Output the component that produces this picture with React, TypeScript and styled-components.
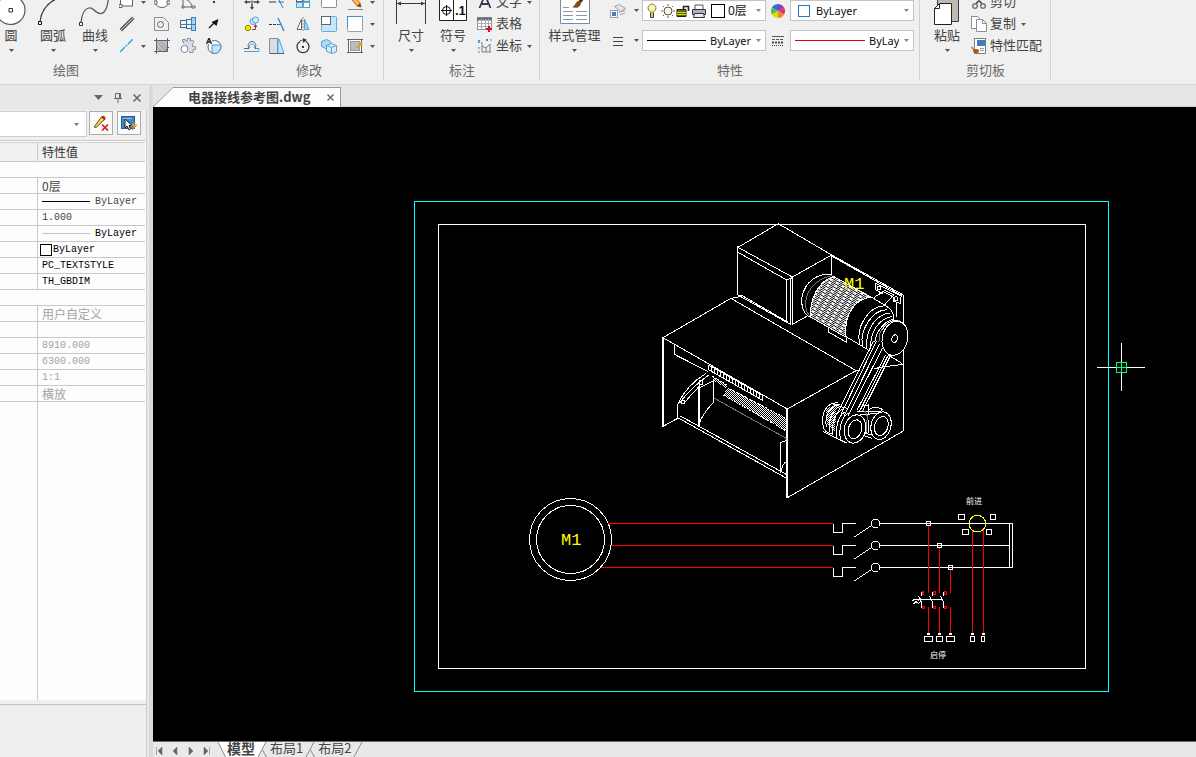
import React from "react";
import styled, { createGlobalStyle } from "styled-components";

const UI = `"Noto Sans", "Noto Sans CJK SC", sans-serif`;
const CJK = `"Noto Sans CJK SC", "Noto Sans", sans-serif`;
const MONO = `"Liberation Mono", "Noto Sans CJK SC", monospace`;

const Global = createGlobalStyle`
  * { box-sizing: border-box; }
  body { margin: 0; overflow: hidden; background: #f0f0f0; font-family: ${CJK}; font-size: 13px; color: #444; }
  button, select { font: inherit; color: inherit; margin: 0; padding: 0; border: 0; background: none; }
  svg { display: block; flex: none; }
`;

const Shell = styled.div`
  display: flex;
  flex-direction: column;
  height: 100vh;
`;

/* ---------- ribbon ---------- */

const Ribbon = styled.header`
  display: flex;
  flex: none;
  overflow: hidden;
  background: #f0f0f0;
  border-bottom: 1px solid #d4d4d4;
`;

const Panel = styled.section<{ $w: number; $scrolled?: number }>`
  display: flex;
  flex-direction: column;
  flex: none;
  width: ${(p) => p.$w}px;
  margin-left: ${(p) => -(p.$scrolled || 0)}px;
  position: relative;
  &::after {
    content: "";
    position: absolute;
    right: 0;
    top: 0;
    bottom: 4px;
    width: 1px;
    background: #d2d2d2;
  }
`;

const PanelBody = styled.div<{ $end?: boolean }>`
  display: flex;
  align-items: flex-end;
  justify-content: ${(p) => (p.$end ? "flex-end" : "flex-start")};
  height: 57px;
  padding: 0 7px 0 6px;
  overflow: hidden;
`;

const PanelTitle = styled.h2`
  margin: 0;
  padding-bottom: 2px;
  font-size: 13px;
  font-weight: 400;
  line-height: 25px;
  text-align: center;
  color: #6a6a6a;
`;

const BigButton = styled.button<{ $w?: number }>`
  display: flex;
  flex-direction: column;
  align-items: center;
  flex: none;
  width: ${(p) => p.$w || 42}px;
  height: 66px;
  line-height: 18px;
  white-space: nowrap;
`;

const ArrowBox = styled.span`
  display: flex;
  align-items: center;
  justify-content: center;
  height: 13px;
`;

const IconGrid = styled.div<{ $cols: string }>`
  display: grid;
  flex: none;
  grid-template-columns: ${(p) => p.$cols};
  grid-template-rows: repeat(3, 22px);
`;

const IconButton = styled.button`
  display: flex;
  align-items: center;
  justify-content: center;
`;

const ToolColumn = styled.div`
  display: grid;
  grid-template-rows: repeat(3, 22px);
  justify-items: start;
  margin-left: 3px;
`;

const ToolButton = styled.button`
  display: flex;
  align-items: center;
  gap: 3px;
  line-height: 18px;
  white-space: nowrap;
  & > svg:last-child { margin-left: 2px; }
  & > span { padding-bottom: 2px; }
`;

const PropGrid = styled.div`
  display: grid;
  grid-template-columns: 24px 12px 124px 24px 124px;
  grid-template-rows: 21px 21px;
  row-gap: 9px;
  padding: 0 0 6px 3px;
  align-items: center;
`;

const Combo = styled.label`
  display: flex;
  align-items: center;
  height: 21px;
  padding: 0 4px;
  background: #fff;
  border: 1px solid #c3c3c3;
  overflow: hidden;
`;

const Select = styled.select<{ $size?: number; $indent?: number }>`
  appearance: none;
  flex: 1;
  min-width: 0;
  outline: 0;
  font-family: ${UI};
  font-size: ${(p) => p.$size || 11}px;
  line-height: 18px;
  color: #111;
  margin: 0 5px 0 ${(p) => p.$indent || 4}px;
`;

const Swatch = styled.span<{ $size: number; $color: string; $gap?: number }>`
  flex: none;
  width: ${(p) => p.$size}px;
  height: ${(p) => p.$size}px;
  margin-left: ${(p) => p.$gap || 0}px;
  border: 1px solid ${(p) => p.$color};
  background: #fff;
`;

const LineSample = styled.span<{ $w: number; $color: string }>`
  flex: none;
  width: ${(p) => p.$w}px;
  height: 1px;
  background: ${(p) => p.$color};
`;

/* ---------- workspace ---------- */

const Workspace = styled.div`
  display: flex;
  flex: 1;
  min-height: 0;
`;

const SidePanel = styled.aside`
  display: flex;
  flex-direction: column;
  flex: none;
  width: 149px;
  background: #e8e8e8;
`;

const SideHead = styled.div`
  display: flex;
  align-items: center;
  justify-content: flex-end;
  height: 25px;
  padding-right: 3px;
`;

const HeadButton = styled.button<{ $gap?: number }>`
  display: flex;
  align-items: center;
  justify-content: center;
  width: 19px;
  height: 20px;
  margin-left: ${(p) => p.$gap || 0}px;
`;

const SideBody = styled.div`
  display: flex;
  flex-direction: column;
  flex: 1;
  min-height: 0;
  width: 147px;
  background: #f0f0f0;
  border-right: 1px solid #cfcfcf;
`;

const SideTools = styled.div`
  display: flex;
  gap: 4px;
  height: 30px;
  padding: 1px 5px 0 0;
`;

const Picker = styled.label`
  display: flex;
  align-items: center;
  flex: 1;
  height: 26px;
  margin-right: -2px;
  padding-right: 7px;
  background: #fff;
  border: 1px solid #ccc;
  border-left: 0;
`;

const FrameButton = styled.button`
  display: flex;
  align-items: center;
  justify-content: center;
  width: 24px;
  height: 24px;
  background: #fbfbfb;
  border: 1px solid #ababab;
`;

const GridArea = styled.div`
  display: flex;
  flex-direction: column;
  flex: 1;
  min-height: 0;
  padding: 1px 1px 0 0;
  background: #fdfdfd;
  border-top: 1px solid #c9c9c9;
`;

const PropTable = styled.table`
  width: 100%;
  table-layout: fixed;
  border-collapse: separate;
  border-spacing: 0;
`;

const NameCol = styled.col`
  width: 38px;
`;

const HeadCell = styled.th`
  height: 20px;
  padding: 0 0 0 4px;
  font-size: 12px;
  font-weight: 400;
  line-height: 18px;
  text-align: left;
  color: #333;
  background: #f1f1f1;
  border-top: 1px solid #d0d0d0;
  border-bottom: 1px solid #c8c8c8;
  &:first-child { border-right: 1px solid #c8c8c8; }
`;

const NameCell = styled.th`
  height: 16px;
  padding: 0;
  border-right: 1px solid #c8c8c8;
  border-bottom: 1px solid #c8c8c8;
`;

const ValueCell = styled.td<{ $tone?: string; $wide?: boolean }>`
  height: 16px;
  padding: 0 0 0 4px;
  font-family: ${(p) => (p.$wide ? CJK : MONO)};
  font-size: ${(p) => (p.$wide ? 12 : 10)}px;
  line-height: 15px;
  white-space: nowrap;
  color: ${(p) => p.$tone || "#444"};
  border-bottom: 1px solid #c8c8c8;
`;

const ValueRow = styled.span<{ $gap: number }>`
  display: flex;
  align-items: center;
  gap: ${(p) => p.$gap}px;
  height: 15px;
`;

const GridRest = styled.div`
  flex: 1;
  width: 38px;
  border-right: 1px solid #c8c8c8;
`;

const Hint = styled.div`
  height: 53px;
  margin-top: 4px;
  background: #eee;
  border-top: 1px solid #c3c3c3;
`;

const Splitter = styled.div`
  flex: none;
  width: 4px;
  background: #dadada;
`;

const DocArea = styled.main`
  display: flex;
  flex-direction: column;
  flex: 1;
  min-width: 0;
`;

const DocTabs = styled.div`
  display: flex;
  align-items: flex-end;
  height: 22px;
  background: #e5e5e5;
  border-bottom: 1px solid #d0d0d0;
`;

const DocTab = styled.div`
  display: flex;
  align-items: center;
  height: 20px;
  margin-bottom: -1px;
  padding: 0 0 0 15px;
  background: #fdfdfd;
  border: 1px solid #9a9a9a;
  border-width: 1px 1px 0 0;
`;

const DocName = styled.button`
  padding-bottom: 2px;
  font-weight: 700;
  line-height: 17px;
  white-space: nowrap;
`;

const Slant = styled.svg`
  margin-bottom: -1px;
`;

const Viewport = styled.div`
  flex: 1;
  min-height: 0;
  background: #000;
  & > svg { width: 100%; height: 100%; }
`;

const LayoutBar = styled.nav`
  display: flex;
  flex: none;
  height: 16px;
  background: #e9e9e9;
  border-top: 1px solid #6a6a6a;
`;

const NavButton = styled.button`
  display: flex;
  align-items: center;
  width: 16px;
  height: 17px;
  padding-left: 2px;
`;

const LayoutTab = styled.button<{ $active?: boolean }>`
  height: 15px;
  font-size: ${(p) => (p.$active ? 14 : 13)}px;
  font-weight: ${(p) => (p.$active ? 700 : 400)};
  line-height: 12px;
  padding-bottom: 3px;
  background: ${(p) => (p.$active ? "#fff" : "transparent")};
  white-space: nowrap;
`;

/* ---------- icons ---------- */

const Caret = ({ color = "#555" }: { color?: string }) => (
  <svg width="5" height="3" viewBox="0 0 5 3"><path d="M0 0h5L2.5 3z" fill={color} /></svg>
);

const Icon = ({ children, w = 16 }: { children: React.ReactNode; w?: number }) => (
  <svg width={w} height="16" viewBox={`0 0 ${w} 16`} fill="none" stroke="#5d6470" strokeWidth="1">{children}</svg>
);

const Big = ({ children }: { children: React.ReactNode }) => (
  <svg width="40" height="35" viewBox="0 0 40 35" fill="none" stroke="#555b66">{children}</svg>
);

const drawIcons: (React.ReactNode | "caret" | null)[] = [
  <Icon><rect x="1.500" y="1.500" width="12" height="10.500" fill="#fff" /><path d="M0 10.500h3v3H0z M12 0h3v3h-3z" fill="#fff" /></Icon>,
  "caret",
  <Icon><ellipse cx="8" cy="8.500" rx="6.500" ry="5" fill="#fff" /><path d="M0 7h3v3H0z M13 7h3v3h-3z" fill="#fff" /></Icon>,
  <Icon><path d="M3 13V3l5 3M3 13h11M3 5c5 0 8 3 9 8" /><path d="M2 12h2v2H2z M12 12h3v2h-3z" fill="#fff" /></Icon>,
  <Icon><path d="M7 7h2v2H7z" fill="#333" stroke="none" /></Icon>,
  <Icon><path d="M1 13.500L13.500 1M2.500 15L15 2.500" stroke="#4d5260" strokeWidth="1.300" /><path d="M1.700 14.300L14.300 1.700" stroke="#b8bcc4" strokeWidth=".8" /></Icon>,
  null,
  <Icon><path d="M.5 1.500h9l5 5v8H.5z" stroke="#8a8e96" /><circle cx="6.500" cy="8.500" r="3" /></Icon>,
  <Icon><rect x=".5" y="4.500" width="6" height="7" fill="#e9f4fc" /><rect x="6.500" y="3.500" width="5" height="9" fill="#e9f4fc" /><rect x="11.500" y="1.500" width="4" height="13" fill="#a6d2f0" stroke="#3c83bd" /><path d="M0 8.500h16" stroke="#2f7fc1" /></Icon>,
  <Icon><path d="M3 12l6-6" stroke="#111" strokeWidth="1.300" /><path d="M12.500 3l-2 7-5-4z" fill="#111" stroke="none" /></Icon>,
  <Icon><path d="M1 14L14 1" stroke="#28a4de" strokeWidth="1.400" strokeDasharray="7 1 2 1" /></Icon>,
  "caret",
  <Icon><rect x="2.500" y="2.500" width="11" height="11" fill="#b9bdc4" /><path d="M0 2.500h16M0 13.500h10M2.500 0v16M13.500 0v10M10 14l5-5" /><path d="M4 5l7 7M7 4l6 6M3 9l4 4" stroke="#999" /></Icon>,
  <Icon><path d="M3.500 5.500V3.500H2.500V1.500H5.500V3H7.500V.5H10.500V3L12.500 2L14 4L12.500 6V8.500H15.500V11.500H13V14.500H9.500V13" fill="#d8dce8" stroke="#8b93a8" /><circle cx="4.500" cy="11" r="3.500" fill="#fff" stroke="#7b8398" /></Icon>,
  <Icon><circle cx="8.500" cy="9" r="6.500" fill="#fff" /><path d="M6 7h9c0 5-3 8.500-6 8.500-2 0-3-1.500-3-2.500z" fill="#bde6fb" stroke="#4a9bcb" /><path d="M0 0h6v6H0z" fill="#f0f0f0" stroke="none" /><path d="M.5 6L3 0L5.500 6M1.500 4h3" stroke="#222" strokeWidth="1.300" /></Icon>,
];

const editIcons: (React.ReactNode | "caret" | null)[] = [
  <Icon><path d="M8 2v4M8 10v4M2 8h4M10 8h4" stroke="#444" strokeWidth="1.500" /><path d="M6 3l2-3 2 3zM6 13l2 3 2-3zM3 6L0 8l3 2zM13 6l3 2-3 2z" fill="#444" stroke="none" /><path d="M7 7h2v2H7z" fill="#fff" /></Icon>,
  <Icon><path d="M0 8h7" stroke="#333" /><path d="M9 8h6M8 2l6 12" stroke="#2687c9" /></Icon>,
  <Icon><rect x="1.500" y="1.500" width="6" height="6" fill="#fff" /><rect x="8.500" y="1.500" width="6" height="6" fill="#bfe4fa" stroke="#5e9fcb" /><rect x="1.500" y="8.500" width="6" height="5" fill="#bfe4fa" stroke="#5e9fcb" /><rect x="8.500" y="8.500" width="6" height="5" fill="#fff" stroke="#5e9fcb" /></Icon>,
  <Icon><rect x=".5" y="1.500" width="15" height="12" rx="1" fill="#fff" stroke="#8a8e96" /></Icon>,
  <Icon><path d="M1 1l9 11 4 1-1-4L6 0z" fill="#f6b25e" stroke="#c4711d" /><path d="M10 12l4 1-1-4z" fill="#8a3a10" stroke="none" /><path d="M1 15.500h15" stroke="#888" /></Icon>,
  "caret",
  <Icon><circle cx="9" cy="5.500" r="3" fill="#d5efff" stroke="#4aa3da" /><circle cx="11.500" cy="4" r="3" fill="#d5efff" stroke="#4aa3da" /><circle cx="4" cy="12" r="2.700" fill="#ffe600" stroke="#9a8a00" /><path d="M8 13.500h3.500V10" stroke="#a33" /><path d="M9.500 11h4l-2-3z" fill="#a33" stroke="none" /></Icon>,
  <Icon><path d="M0 8.500h9" stroke="#333" strokeDasharray="3 1" /><path d="M9 8.500h3" stroke="#2687c9" /><path d="M9 2l6 13" stroke="#2687c9" strokeWidth="1.300" /></Icon>,
  <Icon><path d="M6.500 3v10.500H2z" fill="#fff" /><path d="M9.500 3v10.500H14z" fill="#9fd6f5" stroke="#5e9fcb" /><path d="M8 1v15" strokeDasharray="2 1" stroke="#888" /></Icon>,
  <Icon><rect x=".5" y=".5" width="15" height="15" rx="1" fill="#c3e8fc" stroke="#6fa9cc" /><rect x=".5" y=".5" width="9" height="8" fill="#fff" /></Icon>,
  <Icon><rect x=".5" y=".5" width="15" height="15" rx="1" fill="#fff" stroke="#9a9ea6" /><path d="M0 .5h16M.5 0v11" stroke="#2687c9" strokeDasharray="2 1" /></Icon>,
  "caret",
  <Icon><path d="M0 10.500h5c-2-4 0-7 3-7s5 3 3 7h4" /><path d="M0 13.500h15c1-3-1-3-3-3" stroke="#4aa3da" /><path d="M6 10c-1-3 0-4 2-4s3 1 2 4" stroke="#4aa3da" /></Icon>,
  <Icon><path d="M.5.500h8v15h-8z" fill="#d9dce2" stroke="#8a8e96" /><path d="M9 1h1l5 14.500H9z" fill="#c3e8fc" stroke="#4aa3da" /><path d="M1 15.500h14" /></Icon>,
  <Icon><path d="M5 3.500a6 6 0 1 0 6 0" stroke="#333" strokeWidth="1.300" /><path d="M5 3c2-1 3-1 4-1" stroke="#333" /><path d="M8 0l4 2-4 3z" fill="#333" stroke="none" /><path d="M7 8h2v2H7z" fill="#333" stroke="none" /></Icon>,
  <Icon><path d="M.5 3.500l5-2 4 2v6l-5 1-4-2z" fill="#a7dbf7" stroke="#5e9fcb" /><path d="M5.500 7.500l5-2 5 2v6l-4 2-6-2z" fill="#d3effd" stroke="#5e9fcb" /><path d="M5.500 7.500l5 2 5-2M10.500 9.500v6" stroke="#5e9fcb" /></Icon>,
  <Icon><rect x="1.500" y="1.500" width="13" height="13" fill="#fff" /><rect x="3.500" y="3.500" width="9" height="9" fill="#b9bdc4" stroke="#999" /><path d="M0 1.500h16M0 14.500h16" /><path d="M10 10l5-6" stroke="#e89a3a" strokeWidth="2.500" /></Icon>,
  "caret",
];

const IconSet = ({ items, label }: { items: (React.ReactNode | "caret" | null)[]; label: string }) => (
  <>
    {items.map((it, i) =>
      it === null ? <span key={i} /> : <IconButton key={i} aria-label={`${label} ${i + 1}`}>{it === "caret" ? <Caret /> : it}</IconButton>
    )}
  </>
);

const BigTool = ({ label, w, children }: { label: string; w?: number; children: React.ReactNode }) => (
  <BigButton $w={w}>
    <Big>{children}</Big>
    {label}
    <ArrowBox><Caret /></ArrowBox>
  </BigButton>
);

const LineGlyph = () => <Icon w={12}><path d="M1 4.500h10M1 8.500h10M1 12.500h10" stroke="#444" /></Icon>;

const ColorWheel = () => {
  const cols = ["#8a3fb0", "#e0307a", "#f08a24", "#f2d21f", "#5dbb46", "#2c6fd8"];
  const pt = (a: number) => `${8 + 7 * Math.sin(a)} ${8 - 7 * Math.cos(a)}`;
  return (
    <Icon>
      {cols.map((c, i) => (
        <path key={c} stroke="none" fill={c} d={`M8 8L${pt((i * Math.PI) / 3)}A7 7 0 0 1 ${pt(((i + 1) * Math.PI) / 3)}z`} />
      ))}
    </Icon>
  );
};

/* ---------- drawing ---------- */

const Cad = styled.svg`
  shape-rendering: crispEdges;
  fill: none;
  stroke: #fff;
  & * { vector-effect: non-scaling-stroke; }
`;

const CadTag = styled.text`
  fill: #ff0;
  stroke: none;
  font-family: "Liberation Mono", monospace;
  font-size: 17px;
`;

const CadNote = styled.text`
  fill: #fff;
  stroke: none;
  font-family: ${CJK};
  font-size: 8px;
`;

const teeth = Array.from({ length: 18 }, (_, i) => {
  const x = 160 + i * 9;
  const y = 450 + i * 5.15;
  return `M${x} ${y}v14`;
}).join("");

const Machine = () => (
  <g transform="translate(655 215) scale(0.33333)">
    <defs>
      <pattern id="fins" width="40" height="10" patternUnits="userSpaceOnUse" patternTransform="rotate(30)">
        <rect width="40" height="7" fill="#fff" stroke="none" />
        <path d="M0 3h10M20 3h12" stroke="#000" />
      </pattern>
      <pattern id="brush" width="6" height="6" patternUnits="userSpaceOnUse">
        <path d="M0 0h3v3h-3zM3 3h3v3h-3zM3 0h3v1h-3z" fill="#fff" stroke="none" />
      </pattern>
    </defs>
    {/* control cabinet */}
    <path d="M249 97L370 26L530 120L745 240V648L397 848V582M530 120V182M530 120L412 186L249 97V240L406 328V188M249 112L395 195V322M395 195L412 188V328L457 303M258 240L400 322" />
    <path d="M247 97V240M745 246V310M530 123L742 243" />
    {/* housing top and sides */}
    <path d="M24 368L228 250L248 247L262 240M228 250L603 467L397 582L24 368V634L68 610M603 467L640 464L690 455L745 448M26 368V634M395 582V848M700 420L742 446" />
    <path d="M58 388V418L160 470M160 450L323 541V556L160 464z" />
    <path d={teeth} />
    {/* feeder opening */}
    <path d="M218 518L397 612V650L205 540z" fill="url(#brush)" stroke="none" />
    <path d="M175 484L215 508V520L175 497z" fill="url(#brush)" stroke="none" />
    <path d="M172 484L215 510M218 518L397 612M205 540L397 650" strokeDasharray="2 1" />
    <path d="M175 548L397 672" stroke="#777" />
    <path d="M68 608L397 791M76 603L397 780M68 610V568Q95 510 152 476M73 565Q105 520 162 480M85 568Q110 535 135 512M131 520V632M134 518V632M131 520L175 497V562Q140 600 131 630M376 775V683L397 675M376 775Q382 745 397 738M387 680L395 676" />
    <path d="M80 556h10v10h-10zM133 496h11v12h-11z" />
    {/* motor */}
    <path d="M530 180C490 172 450 200 441 245C437 275 448 300 466 306" />
    <path d="M530 182C490 190 455 220 452 262C452 285 458 300 468 305" stroke="#777" />
    <path d="M535 184L648 246C600 252 568 295 572 366L466 306C464 250 490 200 535 184z" fill="url(#fins)" />
    <path d="M648 246C600 252 568 295 572 366L640 408L700 400L716 310L690 272z" fill="#000" stroke="none" />
    <path d="M648 246C600 252 568 295 572 366M648 246L692 272M520 340V351L575 382V366L645 408" />
    <path d="M615 388C600 340 640 272 690 272C708 278 716 292 716 314M622 392C615 345 650 285 696 284M636 398C630 350 659 298 706 294M648 402C642 357 670 310 712 304M660 402C654 366 678 322 716 312" />
    <path d="M672 380C670 345 695 312 735 318" stroke="#888" />
    <path d="M658 247L690 226L716 240L690 268M661 204V224L682 236V228L715 246V258L738 266V246M661 204L740 244M725 262V306" />
    <circle cx="672" cy="219" r="6" /><circle cx="723" cy="251" r="6" />
    {/* belts */}
    <path d="M660 378L553 592L580 606L684 412z" fill="#000" stroke="none" />
    <path d="M655 378L550 590M664 378L558 598M673 388L568 602M682 400L578 604M692 420L606 586M699 422L614 588M707 421L623 588" />
    <ellipse cx="720" cy="370" rx="38" ry="52" transform="rotate(14 720 370)" fill="#000" />
    <path d="M683 345C690 325 715 310 735 320" />
    <ellipse cx="719" cy="371" rx="8" ry="12" transform="rotate(20 719 371)" />
    {/* driven pulleys */}
    <path d="M550 564C515 560 498 595 504 630C506 648 518 655 530 656M556 568C525 570 508 600 514 636M562 574C535 576 518 610 524 650M568 582C545 586 528 615 534 660M576 590C555 592 540 625 546 668M584 594C565 598 550 630 556 674M504 650L575 684M530 566L575 580" />
    <path d="M514 580L545 570L540 650L516 630z" fill="url(#brush)" stroke="none" />
    <ellipse cx="600" cy="642" rx="32" ry="43" transform="rotate(14 600 642)" fill="#000" />
    <ellipse cx="600" cy="643" rx="20" ry="29" transform="rotate(18 600 643)" />
    <path d="M605 590L680 588M615 598L675 596M628 662L652 670M630 655L650 660M622 572L640 570V600M640 585Q660 570 684 584M634 620V655M642 615V655" />
    <path d="M622 585Q640 590 636 615V650" stroke="#888" />
    <ellipse cx="678" cy="632" rx="30" ry="42" transform="rotate(14 678 632)" fill="#000" />
    <ellipse cx="679" cy="633" rx="20" ry="29" transform="rotate(18 679 633)" />
  </g>
);

const Circuit = () => (
  <g transform="translate(820 485) scale(0.33333)">
    {[116, 182, 248].map((y) => (
      <g key={y}>
        <path d={`M40 ${y}v27h28v-27h40M103 ${y + 40}L154 ${y + 6}`} />
        <circle cx="167" cy={y} r="13" />
      </g>
    ))}
    <path d="M180 116H578V248H180M180 182H568M568 116V248" />
    <path stroke="#f00" d="M325 122V323M358 188V323M391 254V323M325 366V443M358 366V443M391 366V443M457 134V443M490 134V443" />
    {[[325, 116], [358, 182], [391, 248]].map(([x, y]) => (
      <rect key={x} x={x - 6} y={y - 6} width="12" height="12" />
    ))}
    <circle cx="472" cy="116" r="25" stroke="#ff0" />
    <path d="M415 88h18v15h-18zM511 88h15v15h-15zM427 134h18v15h-18zM499 134h15v15h-15z" />
    <path d="M313 455h24v15h-24zM349 455h19v15h-19zM379 455h25v15h-25zM451 455h12v15h-12zM484 455h10v15h-10z" />
    <path d="M322 444l6 6m0-6l-6 6M355 444l6 6m0-6l-6 6M388 444l6 6m0-6l-6 6M454 444l6 6m0-6l-6 6M487 444l6 6m0-6l-6 6" />
    <path d="M298 343H368M305 320V334M338 320V334M371 320V334M296 334L305 352V368M329 334L338 352V368M362 334L371 352V368M277 347l10-5 8 4 6-6M280 358l8-8 8 6 6-8" />
    <path stroke="#f00" d="M307 319h5v9h-5zM340 319h6v9h-6zM373 319h6v9h-6zM307 364h6v6h-6zM340 364h6v6h-6zM373 364h6v6h-6z" />
  </g>
);

const Drawing = () => (
  <Cad viewBox="153 107 1043 634" preserveAspectRatio="xMidYMid meet" role="img" aria-label="电器接线参考图">
    <rect x="414.500" y="201.500" width="694" height="490" stroke="#0ff" />
    <rect x="438.500" y="224.500" width="647" height="444" />
    <Machine />
    <circle cx="570.500" cy="539.500" r="41" />
    <circle cx="570.500" cy="539.500" r="34" />
    <path stroke="#f00" d="M608 523.500H833M611 545.500H833M601 567.500H833" />
    <Circuit />
    <CadTag x="561" y="545">M1</CadTag>
    <CadTag x="844" y="289">M1</CadTag>
    <CadNote x="966" y="504">前进</CadNote>
    <CadNote x="930" y="658">启停</CadNote>
    <path d="M1097 367.500H1145M1121.500 343V391" />
    <path d="M1116.500 362.500h10v10h-10zM1117 367.500h10M1121.500 363v10" stroke="#00ff80" />
  </Cad>
);

/* ---------- properties ---------- */

type Row = { group?: boolean; value?: React.ReactNode; tone?: string; wide?: boolean };
const rows: Row[] = [
  { group: true },
  { value: "0层", wide: true },
  { value: <ValueRow $gap={5}><LineSample $w={48} $color="#000" />ByLayer</ValueRow> },
  { value: "1.000" },
  { value: <ValueRow $gap={5}><LineSample $w={48} $color="#c4c4c4" />ByLayer</ValueRow>, tone: "#000" },
  { value: <ValueRow $gap={1}><Swatch $size={12} $color="#000" $gap={-2} />ByLayer</ValueRow>, tone: "#000" },
  { value: "PC_TEXTSTYLE", tone: "#000" },
  { value: "TH_GBDIM", tone: "#000" },
  { group: true },
  { value: "用户自定义", tone: "#a4a4a4", wide: true },
  {},
  { value: "8910.000", tone: "#a4a4a4" },
  { value: "6300.000", tone: "#a4a4a4" },
  { value: "1:1", tone: "#a4a4a4" },
  { value: "横放", tone: "#a4a4a4", wide: true },
];

const Properties = () => (
  <SidePanel>
    <SideHead>
      <HeadButton aria-label="菜单"><svg width="9" height="5"><path d="M0 0h9L4.500 5z" fill="#666" /></svg></HeadButton>
      <HeadButton aria-label="固定"><svg width="8" height="10" fill="none" stroke="#666"><path d="M1.500 .5h5v5h-5zM5.500 1v5M0 5.500h8M4 6v4" /></svg></HeadButton>
      <HeadButton aria-label="关闭"><svg width="8" height="8" stroke="#666" strokeWidth="1.500"><path d="M.5 .5l7 7M7.500 .5l-7 7" /></svg></HeadButton>
    </SideHead>
    <SideBody>
      <SideTools>
        <Picker><Select aria-label="对象"><option></option></Select><Caret color="#777" /></Picker>
        <FrameButton aria-label="清除">
          <Icon><path d="M1 12L8.500 2L10.500 1L12 2.500L11.500 4.500L3 12.500z" fill="#ffd257" stroke="#6a4a10" /><path d="M9 1.500l3 3" stroke="#a22" strokeWidth="2" /><path d="M9 9.500l6 6M15 9.500l-6 6" stroke="#c22" strokeWidth="1.700" /></Icon>
        </FrameButton>
        <FrameButton aria-label="快速选择">
          <Icon><rect x=".5" y="1.500" width="13" height="12" fill="#3f87c8" stroke="#1f5f9c" /><path d="M2 3.500h9" stroke="#8fc0ea" /><path d="M4 4v9l2-2 2 4 1.500-1-1.500-3.500h3z" fill="#fff" stroke="#222" /><path d="M14 7l-4 4h3l-2 4 5-5h-3z" fill="#ffb52e" stroke="#d07a10" strokeWidth=".7" /></Icon>
        </FrameButton>
      </SideTools>
      <GridArea>
        <PropTable>
          <colgroup><NameCol /><col /></colgroup>
          <thead><tr><HeadCell aria-label="特性" /><HeadCell>特性值</HeadCell></tr></thead>
          <tbody>
            {rows.map((r, i) => (
              <tr key={i}>
                {r.group ? <ValueCell colSpan={2} /> : <><NameCell /><ValueCell $tone={r.tone} $wide={r.wide}>{r.value}</ValueCell></>}
              </tr>
            ))}
          </tbody>
        </PropTable>
        <GridRest />
      </GridArea>
      <Hint />
    </SideBody>
  </SidePanel>
);

const navShapes = ["M1.500 0v8M7 0v8L3 4z", "M6 0v8L2 4z", "M2 0v8l4-4z", "M1 0v8l4-4zM6.500 0v8"];

const TabSeam = ({ active, last }: { active?: boolean; last?: boolean }) => (
  <svg width="15" height="15" viewBox="0 0 15 15" fill="none" stroke="#8a8a8a">
    {active && <path d="M0 0H11L3 15H0z" fill="#fff" stroke="none" />}
    <path d="M11 0L3 15" />
    {!last && <path d="M7.500 8L11.500 15" />}
  </svg>
);

export default function App() {
  return (
    <Shell>
      <Global />
      <Ribbon>
        <Panel $w={336} $scrolled={102}>
          <PanelBody $end>
            <BigTool label="圆"><circle cx="19.500" cy="19" r="14.500" fill="#fff" strokeWidth="1.200" /><path d="M18 17.500h3.500v3.500H18z" stroke="#333" /></BigTool>
            <BigTool label="圆弧"><path d="M7 31C8 20 14 12 25 7" stroke="#333" strokeWidth="1.300" /><path d="M5.500 30.500h3v3h-3z" fill="#fff" stroke="#111" /></BigTool>
            <BigTool label="曲线"><path d="M6 32C7 18 14 14 19 19C25 25 32 25 33.500 6" strokeWidth="1.300" /><path d="M4.500 31.500h3v3h-3z" fill="#fff" stroke="#333" /></BigTool>
            <IconGrid $cols="22px 11px 26px 26px 26px"><IconSet items={drawIcons} label="绘图" /></IconGrid>
          </PanelBody>
          <PanelTitle>绘图</PanelTitle>
        </Panel>

        <Panel $w={150}>
          <PanelBody>
            <IconGrid $cols="24px 26px 26px 26px 26px 8px"><IconSet items={editIcons} label="修改" /></IconGrid>
          </PanelBody>
          <PanelTitle>修改</PanelTitle>
        </Panel>

        <Panel $w={156}>
          <PanelBody>
            <BigTool label="尺寸"><path d="M5.500 0V33M34.500 0V33" stroke="#333b48" /><path d="M6 12.500H34" stroke="#333b48" /><path d="M6 12.500l4-2v4zM34 12.500l-4-2v4z" fill="#333b48" stroke="none" /></BigTool>
            <BigTool label="符号">
              <path d="M6.500 8.500h27v21h-27zM20.500 8.500v21" fill="#fff" stroke="#222" />
              <circle cx="13.500" cy="19.500" r="4" stroke="#111" /><path d="M8 19.500h11M13.500 14v11" stroke="#111" />
              <text x="22" y="24" fill="#111" stroke="none" fontFamily="Liberation Sans" fontWeight="700" fontSize="13">.1</text>
            </BigTool>
            <ToolColumn>
              <ToolButton><Icon><path d="M2.500 14L8 1l5.500 13M4.500 10h7" stroke="#333b48" strokeWidth="1.800" /></Icon><span>文字</span><Caret /></ToolButton>
              <ToolButton><Icon><rect x=".5" y="1.500" width="14" height="12" fill="#fff" stroke="#8a8e96" /><path d="M0 3h15" stroke="#6a6f78" strokeWidth="3" /><path d="M0 7.500h15M0 10.500h15M4.500 3v11M8.500 3v11M11.500 3v11" stroke="#a8acb4" /><path d="M9 13h6M12 10v6" stroke="#c8102e" strokeWidth="2" /></Icon><span>表格</span></ToolButton>
              <ToolButton><Icon><path d="M5 4v10M5 14h9M5 8l4 2 4-4v8M9 10v4" stroke="#777d88" /><path d="M1 2l2 3M3 2L1 5M9 1l2 2M11 1L9 3M13 2h2M1 10h2M1 14h2" stroke="#2d8fd0" /></Icon><span>坐标</span><Caret /></ToolButton>
            </ToolColumn>
          </PanelBody>
          <PanelTitle>标注</PanelTitle>
        </Panel>

        <Panel $w={380}>
          <PanelBody>
            <BigTool label="样式管理" w={57}>
              <path d="M5.500 4.500h29v28h-29z" fill="#fff" stroke="#6f8fae" />
              <path d="M8 16.500h6M8 20.500h10M8 24.500h10M8 28.500h10M21 20.500h11M21 24.500h11M21 28.500h11" stroke="#8f99a6" />
              <path d="M31 3L24 12" stroke="#333" strokeWidth="3" /><path d="M26 11c0 5-4 7-9 5 3-1 3-4 6-6z" fill="#8a4a16" stroke="none" />
            </BigTool>
            <PropGrid>
              <IconButton aria-label="图层"><Icon><path d="M4.500 3.500l5-2 6 4-5 3zM9 9.500l6-2M10 12l5-2" fill="#e4e6ea" stroke="#9a9ea6" /><rect x=".5" y="7.500" width="7" height="7" fill="#fff" stroke="#9a9ea6" /><path d="M2 9h4v4H2z" fill="#3c83bd" stroke="none" /></Icon></IconButton>
              <IconButton aria-label="图层选项"><Caret /></IconButton>
              <Combo>
                <Icon w={12}><path d="M3.500 9C1 7 .5 5 1.500 3Q5 -1 8.500 3C9.500 5 9 7 6.500 9z" fill="#fff3a0" stroke="#777" /><path d="M3.500 9.500v5h3v-5" fill="#e8c63a" stroke="#444" /></Icon>
                <Icon><circle cx="9" cy="8" r="4" stroke="#555" fill="#fff8e0" /><path d="M9 1v2M9 13v2M2 8h2M14 8h2M4 3l1 1M13 12l1 1M14 3l-1 1M5 12l-1 1" stroke="#855" /></Icon>
                <Icon><path d="M2 6.500h9v7H2z" fill="#6b6b00" stroke="#222200" /><path d="M2 9.500h9M2 11.500h9" stroke="#d0d020" /><path d="M8.500 6V3.500h5V8" stroke="#222" strokeWidth="1.600" /></Icon>
                <Icon><path d="M4 6V2h8v4" fill="#fff" stroke="#555" /><path d="M1.500 6.500h13v5h-13z" fill="#aab4c0" stroke="#333" /><path d="M3.500 10.500h9l1 4h-11z" fill="#e8eef4" stroke="#333" /></Icon>
                <Swatch $size={14} $color="#000" $gap={4} />
                <Select aria-label="图层" $size={12} $indent={3}><option>0层</option></Select>
                <Caret color="#888" />
              </Combo>
              <IconButton aria-label="颜色"><ColorWheel /></IconButton>
              <Combo>
                <Swatch $size={12} $color="#1a7fd4" $gap={3} />
                <Select aria-label="颜色" $indent={6}><option>ByLayer</option></Select>
                <Caret color="#888" />
              </Combo>
              <IconButton aria-label="线宽"><LineGlyph /></IconButton>
              <IconButton aria-label="线宽选项"><Caret /></IconButton>
              <Combo>
                <LineSample $w={59} $color="#000" />
                <Select aria-label="线宽"><option>ByLayer</option></Select>
                <Caret color="#888" />
              </Combo>
              <IconButton aria-label="线型"><Icon w={12}><path d="M0 3.500h12" stroke="#555" /><path d="M0 6.500h12" stroke="#555" strokeDasharray="3 1" /><path d="M0 9.500h12" stroke="#444" strokeWidth="2" strokeDasharray="2 1" /><path d="M0 12.500h12" stroke="#444" strokeDasharray="1 1" /></Icon></IconButton>
              <Combo>
                <LineSample $w={70} $color="#e00000" />
                <Select aria-label="线型"><option>ByLayer</option></Select>
                <Caret color="#888" />
              </Combo>
            </PropGrid>
          </PanelBody>
          <PanelTitle>特性</PanelTitle>
        </Panel>

        <Panel $w={131}>
          <PanelBody>
            <BigTool label="粘贴">
              <path d="M10.500 3.500h21v27h-21z" fill="#c2b8ab" stroke="#333b48" />
              <path d="M12.500 12.500h12v21h-17v-16z" fill="#fff" stroke="#222" /><path d="M12.500 12.500v5h-5" stroke="#222" />
            </BigTool>
            <ToolColumn>
              <ToolButton><Icon><path d="M4 1l7 9M12 1L5 10" stroke="#444" strokeWidth="1.600" /><circle cx="4" cy="12" r="2.300" stroke="#777" strokeWidth="1.500" /><circle cx="12" cy="12" r="2.300" stroke="#777" strokeWidth="1.500" /></Icon><span>剪切</span></ToolButton>
              <ToolButton><Icon><path d="M.5 .5h6l3 3v9h-9z" fill="#fff" stroke="#8a8e96" /><path d="M5.500 3.500h6l4 4v8h-10z" fill="#fff" stroke="#8a8e96" /><path d="M11.500 3.500v4h4" stroke="#8a8e96" /></Icon><span>复制</span><Caret /></ToolButton>
              <ToolButton><Icon><path d="M3.500 .5h11v15h-11z" fill="#fff" stroke="#777d88" /><path d="M6 2h8v6H6z" fill="#3c7fba" stroke="none" /><path d="M9 10.500h4M9 12.500h4" stroke="#999" /><path d="M0 9l4 3" stroke="#d88b3a" strokeWidth="2" /><ellipse cx="5" cy="13" rx="3" ry="2" fill="#a5561a" stroke="none" /></Icon><span>特性匹配</span></ToolButton>
            </ToolColumn>
          </PanelBody>
          <PanelTitle>剪切板</PanelTitle>
        </Panel>
      </Ribbon>

      <Workspace>
        <Properties />
        <Splitter />
        <DocArea>
          <DocTabs>
            <Slant width="20" height="20" viewBox="0 0 20 20"><path d="M0 20L20 0V20z" fill="#fdfdfd" /><path d="M0 20L20 .5" stroke="#9a9a9a" /></Slant>
            <DocTab>
              <DocName>电器接线参考图.dwg</DocName>
              <HeadButton aria-label="关闭图纸" $gap={10}><svg width="7" height="7" stroke="#666" strokeWidth="1.400"><path d="M.5 .5l6 6M6.500 .5l-6 6" /></svg></HeadButton>
            </DocTab>
          </DocTabs>
          <Viewport><Drawing /></Viewport>
          <LayoutBar>
            {navShapes.map((d, i) => (
              <NavButton key={i} aria-label={["首个", "上一个", "下一个", "末个"][i]}>
                <svg width="8" height="8" fill="#666" stroke="#666" strokeWidth=".5"><path d={d} /></svg>
              </NavButton>
            ))}
            <svg width="10" height="15" viewBox="0 0 10 15"><path d="M1 0H10V15H8.500z" fill="#fff" /><path d="M1 0L8.500 15" stroke="#8a8a8a" /></svg>
            <LayoutTab $active>模型</LayoutTab>
            <TabSeam active />
            <LayoutTab>布局1</LayoutTab>
            <TabSeam />
            <LayoutTab>布局2</LayoutTab>
            <TabSeam last />
          </LayoutBar>
        </DocArea>
      </Workspace>
    </Shell>
  );
}
